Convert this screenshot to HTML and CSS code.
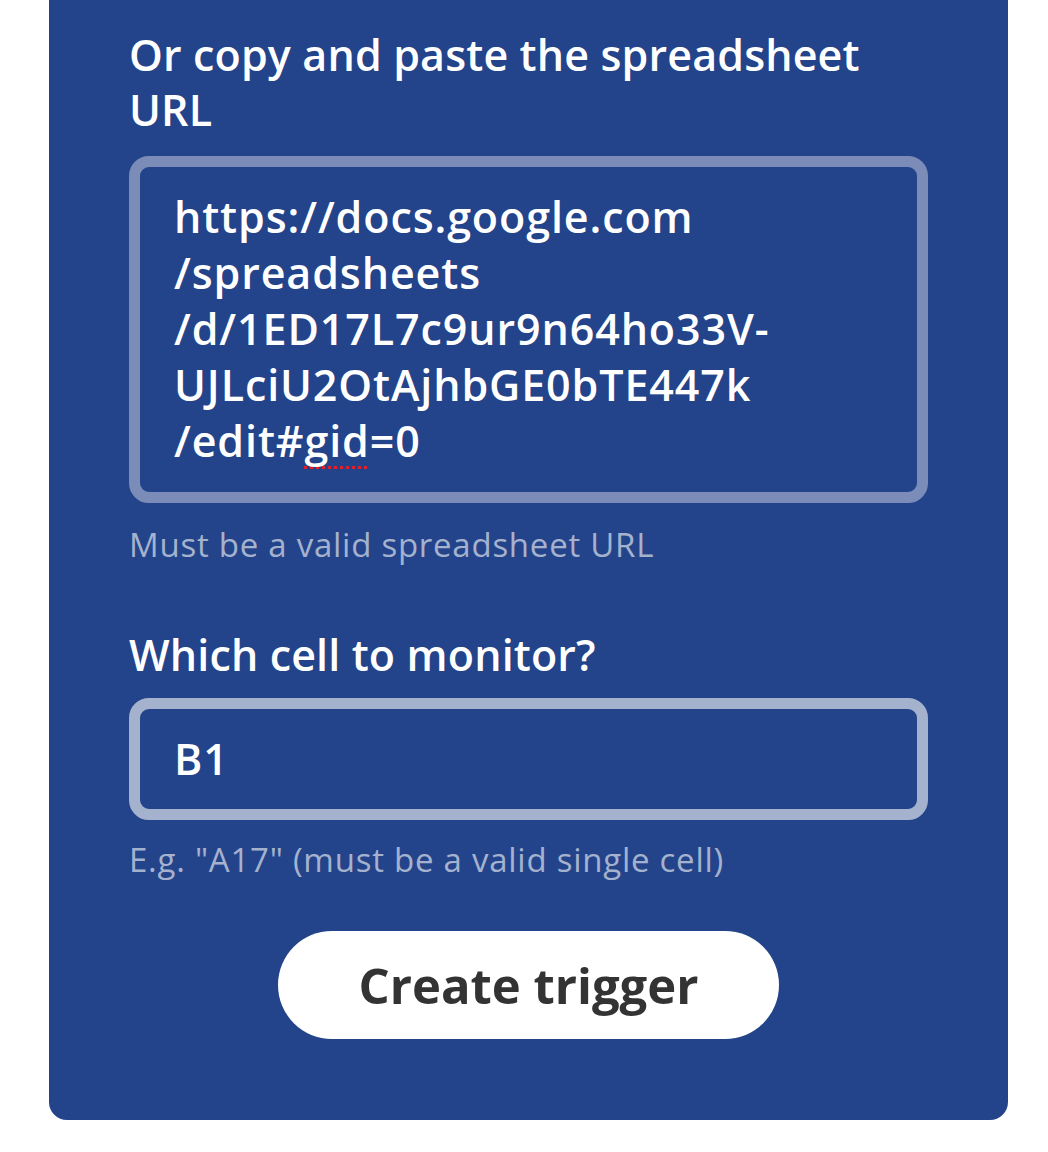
FILE: index.html
```html
<!DOCTYPE html>
<html>
<head>
<meta charset="utf-8">
<link rel="stylesheet" href="styles.css">
</head>
<body>
<div class="card">
  <div class="field">
    <h2 class="label">Or copy and paste the spreadsheet URL</h2>
    <div class="input input-url">https://docs.google.com<br>/spreadsheets<br>/d/1ED17L7c9ur9n64ho33V-<br>UJLciU2OtAjhbGE0bTE447k<br>/edit#<span class="spell">gid</span>=0</div>
    <p class="help">Must be a valid spreadsheet URL</p>
  </div>
  <div class="field">
    <h2 class="label">Which cell to monitor?</h2>
    <div class="input input-cell">B1</div>
    <p class="help">E.g. "A17" (must be a valid single cell)</p>
  </div>
  <div class="actions">
    <button class="btn">Create trigger</button>
  </div>
</div>
</body>
</html>
```
FILE: styles.css
```css
html, body {
  margin: 0;
  padding: 0;
  background: #ffffff;
}
body {
  font-family: "Open Sans", "Noto Sans", sans-serif;
  width: 1048px;
  height: 1152px;
  overflow: hidden;
}
.card {
  margin: -30px 0 0 49px;
  width: 959px;
  box-sizing: border-box;
  background: #23448a;
  border-radius: 18px;
  padding: 57px 80px 81px 80px;
  color: #ffffff;
}
.label {
  margin: 0;
  font-size: 43px;
  line-height: 55px;
  font-weight: 600;
  letter-spacing: 0.15px;
}
.input {
  margin-top: 19px;
  border: 11px solid #a5b2ce;
  border-radius: 20px;
  padding: 0 34px;
  font-size: 43px;
  font-weight: 600;
  letter-spacing: 0.9px;
}
.input-url {
  border-color: #7b8cb8;
  padding-top: 22px;
  padding-bottom: 23px;
  line-height: 56px;
}
.input-cell {
  height: 100px;
  line-height: 100px;
}
.spell {
  text-decoration: underline dotted #e0202a;
  text-decoration-thickness: 3px;
  text-underline-offset: 9px;
  text-decoration-skip-ink: none;
}
.help {
  margin: 22px 0 0 0;
  font-size: 33px;
  line-height: 40px;
  letter-spacing: 0.75px;
  color: #a5b2ce;
  font-weight: 400;
}
.field + .field {
  margin-top: 62px;
}
.field + .field .input {
  margin-top: 16px;
}
.field + .field .help {
  margin-top: 20px;
}
.actions {
  display: flex;
  justify-content: center;
  margin-top: 51px;
}
.btn {
  width: 501px;
  height: 108px;
  border: none;
  border-radius: 54px;
  background: #ffffff;
  color: #333333;
  font-family: "Open Sans", "Noto Sans", sans-serif;
  font-size: 49px;
  font-weight: 700;
  padding: 0;
}
```
